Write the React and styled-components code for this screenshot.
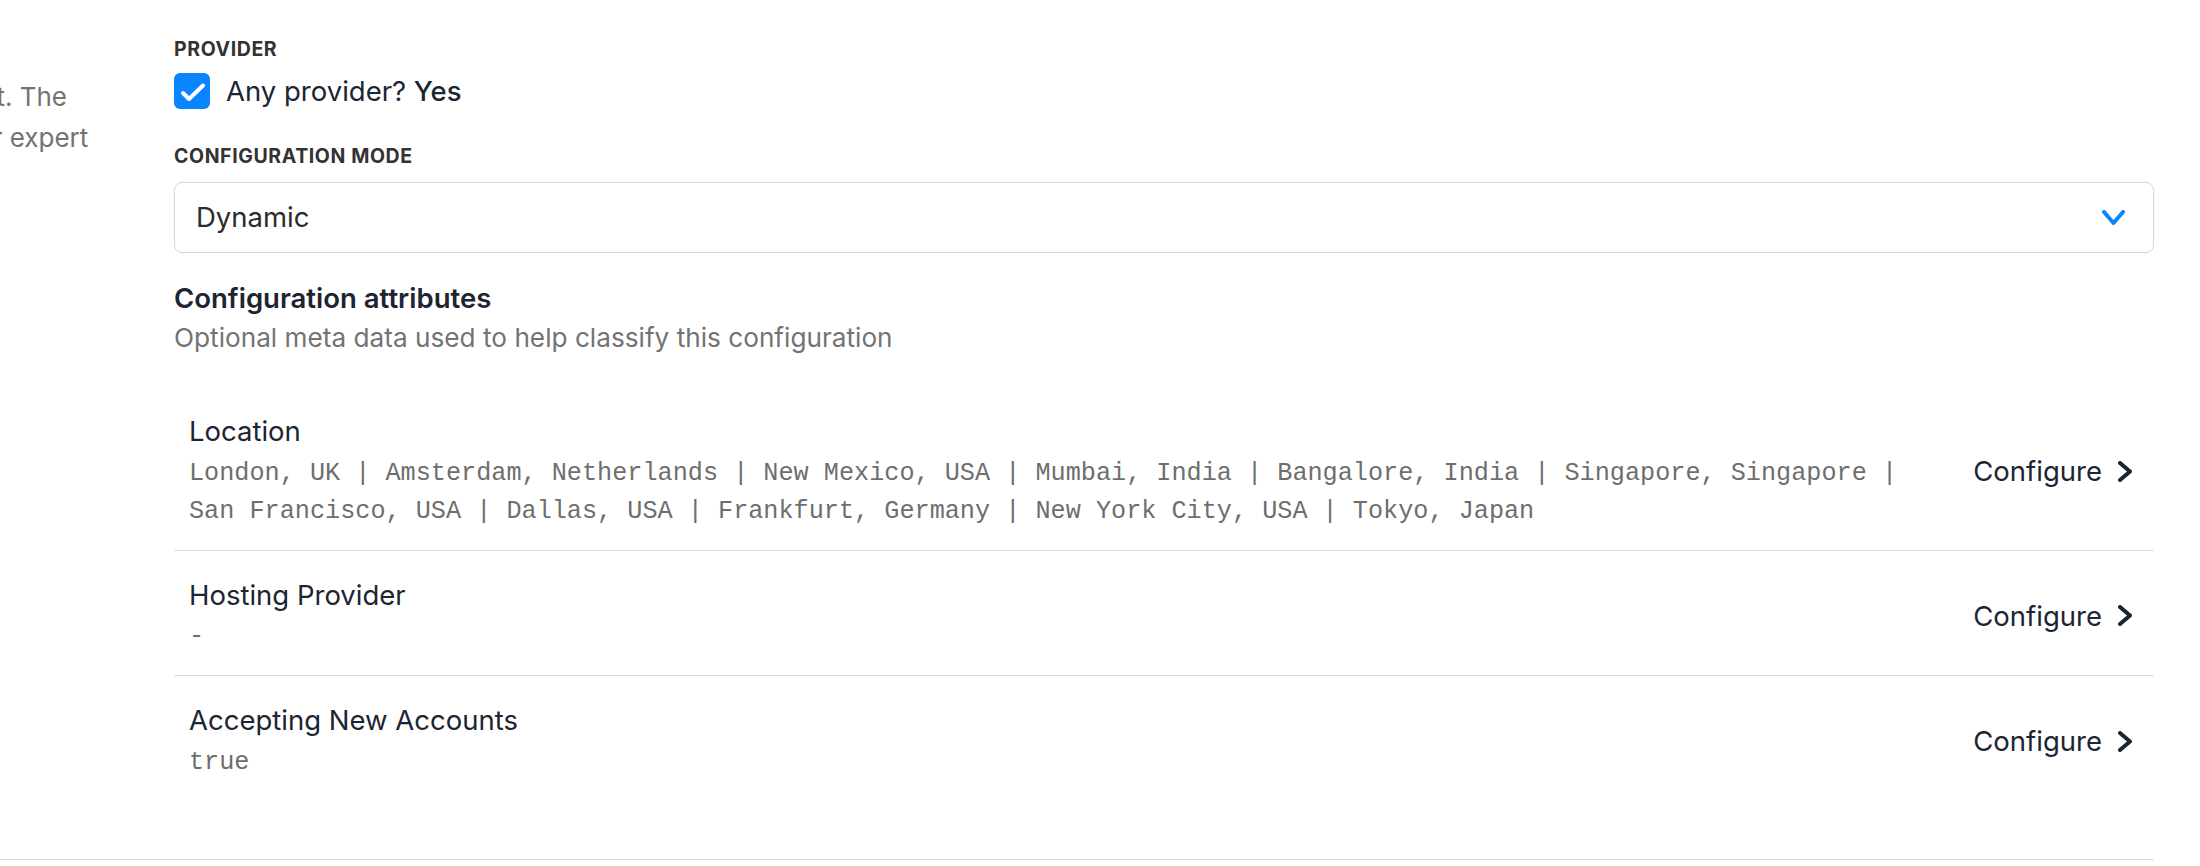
import React from 'react';
import styled, { createGlobalStyle } from 'styled-components';

const GlobalStyle = createGlobalStyle`
    html, body {
        margin: 0;
        padding: 0;
        background: #ffffff;
    }
    body {
        font-family: Inter, "Noto Sans", sans-serif;
        -webkit-font-smoothing: antialiased;
    }
`;

const Section = styled.div`
    width: 2154px;
    display: grid;
    grid-template-columns: 90px 1980px;
    column-gap: 84px;
    border-bottom: 1px solid #dcdcdc;
`;

const Aside = styled.div`
    overflow: hidden;
    padding-top: 77px;
    display: flex;
    flex-direction: column;
    align-items: flex-end;
`;

const AsideLine = styled.span`
    display: block;
    white-space: nowrap;
    font-size: 26px;
    line-height: 40.7px;
    color: #737373;
    margin-right: ${(p) => p.$inset || 0}px;
`;

const Main = styled.div`
    padding: 36.8px 0 58px;
    display: flex;
    flex-direction: column;
`;

const FieldLabel = styled.div`
    font-size: 19.5px;
    font-weight: 700;
    letter-spacing: 0.6px;
    line-height: 24px;
    color: #333333;
    text-transform: uppercase;
    margin-top: ${(p) => p.$top || 0}px;
`;

const CheckRow = styled.label`
    display: flex;
    align-items: center;
    gap: 16px;
    height: 36px;
    margin-top: 12.2px;
    cursor: pointer;
`;

const CheckBox = styled.span`
    width: 36px;
    height: 36px;
    border-radius: 6px;
    background: #0a84ff;
    display: grid;
    place-items: center;
    flex-shrink: 0;
`;

const CheckText = styled.span`
    font-size: 27.5px;
    color: #1c2532;

    strong {
        font-weight: 500;
    }
`;

const Select = styled.div`
    margin-top: 13.5px;
    height: 71px;
    box-sizing: border-box;
    border: 1px solid #d6d6d6;
    border-radius: 8px;
    display: flex;
    align-items: center;
    justify-content: space-between;
    padding: 0 28px 0 21px;
    font-size: 27.5px;
    color: #2b2b2b;
`;

const Heading = styled.h3`
    margin: 25.9px 0 0;
    font-size: 27.5px;
    font-weight: 600;
    line-height: 38px;
    color: #1c2532;
`;

const SubText = styled.p`
    margin: 3px 0 0;
    font-size: 26.2px;
    line-height: 36px;
    color: #737373;
`;

const AttributeList = styled.div`
    margin-top: 31.5px;
    display: flex;
    flex-direction: column;
`;

const AttributeRow = styled.div`
    display: flex;
    align-items: center;
    padding: 25px 22px 19px 15px;
    border-bottom: 1px solid #dcdcdc;

    &:last-child {
        border-bottom: none;
    }
`;

const AttributeInfo = styled.div`
    flex: 1;
    min-width: 0;
`;

const AttributeName = styled.div`
    font-size: 27.5px;
    line-height: 38px;
    color: #1c2532;
`;

const AttributeValue = styled.div`
    margin-top: 4.5px;
    max-width: 1740px;
    font-family: "Liberation Mono", "DejaVu Sans Mono", monospace;
    font-size: 25.2px;
    line-height: 38px;
    color: #6e6e6e;
`;

const ConfigureButton = styled.button`
    display: flex;
    align-items: center;
    gap: 16px;
    flex-shrink: 0;
    margin-left: 24px;
    padding: 0;
    border: 0;
    background: none;
    font-family: inherit;
    font-size: 27.5px;
    color: #1c2532;
    cursor: pointer;
`;

const locations = [
    'London, UK',
    'Amsterdam, Netherlands',
    'New Mexico, USA',
    'Mumbai, India',
    'Bangalore, India',
    'Singapore, Singapore',
    'San Francisco, USA',
    'Dallas, USA',
    'Frankfurt, Germany',
    'New York City, USA',
    'Tokyo, Japan',
];

const attributes = [
    { name: 'Location', value: locations.join(' | ') },
    { name: 'Hosting Provider', value: '-' },
    { name: 'Accepting New Accounts', value: 'true' },
];

const CheckIcon = () => (
    <svg width="36" height="36" viewBox="0 0 36 36">
        <polyline points="9,20 15,26 29,12.5" fill="none" stroke="#fff" strokeWidth="4" strokeLinecap="round" strokeLinejoin="round" />
    </svg>
);

const ChevronDown = () => (
    <svg width="23" height="15" viewBox="0 0 23 15">
        <polyline points="2,2 11.5,13 21,2" fill="none" stroke="#0a84ff" strokeWidth="4" strokeLinecap="round" strokeLinejoin="round" />
    </svg>
);

const ChevronRight = () => (
    <svg width="14" height="21" viewBox="0 0 14 21">
        <polyline points="2,2 12,10.5 2,19" fill="none" stroke="currentColor" strokeWidth="4" strokeLinecap="round" strokeLinejoin="round" />
    </svg>
);

const App = () => {
    return (
        <>
            <GlobalStyle />
            <Section>
                <Aside>
                    <AsideLine $inset={23}>Select the provider and configuration mode for this environment. The</AsideLine>
                    <AsideLine $inset={1.7}>dynamic mode is recommended unless you are an advanced user or expert</AsideLine>
                </Aside>
                <Main>
                    <FieldLabel>Provider</FieldLabel>
                    <CheckRow>
                        <CheckBox><CheckIcon /></CheckBox>
                        <CheckText>Any provider? <strong>Yes</strong></CheckText>
                    </CheckRow>

                    <FieldLabel $top={35.3}>Configuration mode</FieldLabel>
                    <Select>
                        <span>Dynamic</span>
                        <ChevronDown />
                    </Select>

                    <Heading>Configuration attributes</Heading>
                    <SubText>Optional meta data used to help classify this configuration</SubText>

                    <AttributeList>
                        {attributes.map((attr) => (
                            <AttributeRow key={attr.name}>
                                <AttributeInfo>
                                    <AttributeName>{attr.name}</AttributeName>
                                    <AttributeValue>{attr.value}</AttributeValue>
                                </AttributeInfo>
                                <ConfigureButton>
                                    Configure
                                    <ChevronRight />
                                </ConfigureButton>
                            </AttributeRow>
                        ))}
                    </AttributeList>
                </Main>
            </Section>
        </>
    );
};

export default App;
